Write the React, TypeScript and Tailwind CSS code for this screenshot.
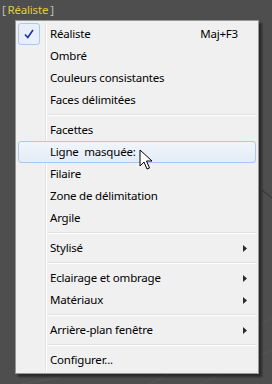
import React from "react";

type Item =
  | { type: "item"; label: string; checked?: boolean; shortcut?: string; sub?: boolean; hover?: boolean }
  | { type: "sep" };

const items: Item[] = [
  { type: "item", label: "Réaliste", checked: true, shortcut: "Maj+F3" },
  { type: "item", label: "Ombré" },
  { type: "item", label: "Couleurs consistantes" },
  { type: "item", label: "Faces délimitées" },
  { type: "sep" },
  { type: "item", label: "Facettes" },
  { type: "item", label: "Ligne  masquée", hover: true },
  { type: "item", label: "Filaire" },
  { type: "item", label: "Zone de délimitation" },
  { type: "item", label: "Argile" },
  { type: "sep" },
  { type: "item", label: "Stylisé", sub: true },
  { type: "sep" },
  { type: "item", label: "Eclairage et ombrage", sub: true },
  { type: "item", label: "Matériaux", sub: true },
  { type: "sep" },
  { type: "item", label: "Arrière-plan fenêtre", sub: true },
  { type: "sep" },
  { type: "item", label: "Configurer..." },
];

function Arrow() {
  return (
    <svg width="4" height="7" viewBox="0 0 4 7" className="block">
      <path d="M0 0 L4 3.5 L0 7 Z" fill="#2b2b2b" />
    </svg>
  );
}

export default function App() {
  return (
    <div
      className="relative w-[272px] h-[384px] overflow-hidden bg-[#4e4e4e]"
      style={{ fontFamily: '"Noto Sans", "Open Sans", sans-serif' }}
    >
      <svg className="absolute left-0 top-0" width="272" height="384">
        <line x1="262" y1="190" x2="272" y2="198" stroke="#2f2f2f" strokeWidth="1" />
        <line x1="150" y1="384" x2="272" y2="318" stroke="#575757" strokeWidth="1" />
        <line x1="200" y1="384" x2="272" y2="350" stroke="#575757" strokeWidth="1" />
        <line x1="20" y1="384" x2="60" y2="378" stroke="#575757" strokeWidth="1" />
      </svg>
      <div className="relative h-[20px] pl-[2px] flex items-center text-[11.5px] tracking-[-0.2px] leading-none">
        <span className="text-[#bdbdbd]">[</span>
        <span className="text-[#e0cd3c] ml-[2px] mr-[2px]">Réaliste</span>
        <span className="text-[#bdbdbd]">]</span>
      </div>
      <div className="relative ml-[15px] w-[244px] border border-[#979797] bg-[#f0f0f0] p-[2px] shadow-[3px_3px_2px_rgba(0,0,0,0.45)]">
        <div className="absolute left-[29px] top-[2px] bottom-[2px] w-[1px] bg-[#e2e2e2]" />
        <div className="absolute left-[30px] top-[2px] bottom-[2px] w-[1px] bg-[#ffffff]" />
        {items.map((it, i) =>
          it.type === "sep" ? (
            <div key={i} className="h-[8px] flex flex-col justify-center pl-[30px]">
              <div className="h-[1px] bg-[#e0e0e0]" />
              <div className="h-[1px] bg-[#ffffff]" />
            </div>
          ) : (
            <div
              key={i}
              className={
                "relative h-[22px] flex items-center text-[11.5px] tracking-[-0.2px] text-black " +
                (it.hover
                  ? "rounded-[3px] border border-[#a8caf0] bg-gradient-to-b from-[#f1f5fb] to-[#e3ecf7]"
                  : "border border-transparent")
              }
            >
              <div className="w-[31px] h-full flex items-center">
                {it.checked && (
                  <div className="ml-[-1px] w-[22px] h-[22px] rounded-[3px] border border-[#a8caf0] bg-[#e8eff8] flex items-center justify-center">
                    <svg width="10" height="10" viewBox="0 0 10 10">
                      <path d="M1 5.5 L3.8 8.5 L9 1" fill="none" stroke="#1d2fa0" strokeWidth="1.6" />
                    </svg>
                  </div>
                )}
              </div>
              <span className="whitespace-pre">{it.label}</span>
              {it.hover && <span>:</span>}
              <div className="flex-1" />
              {it.shortcut && <span className="mr-[17px]">{it.shortcut}</span>}
              {it.sub && (
                <div className="mr-[8px]">
                  <Arrow />
                </div>
              )}
            </div>
          )
        )}
      </div>
      <svg className="absolute left-[139px] top-[149px]" width="14" height="22" viewBox="0 0 14 22">
        <path
          d="M1 1 L1 17 L5 13 L8 20 L10.5 19 L7.5 12 L13 12 Z"
          fill="#ffffff"
          stroke="#000000"
          strokeWidth="1"
          strokeLinejoin="round"
        />
      </svg>
    </div>
  );
}
